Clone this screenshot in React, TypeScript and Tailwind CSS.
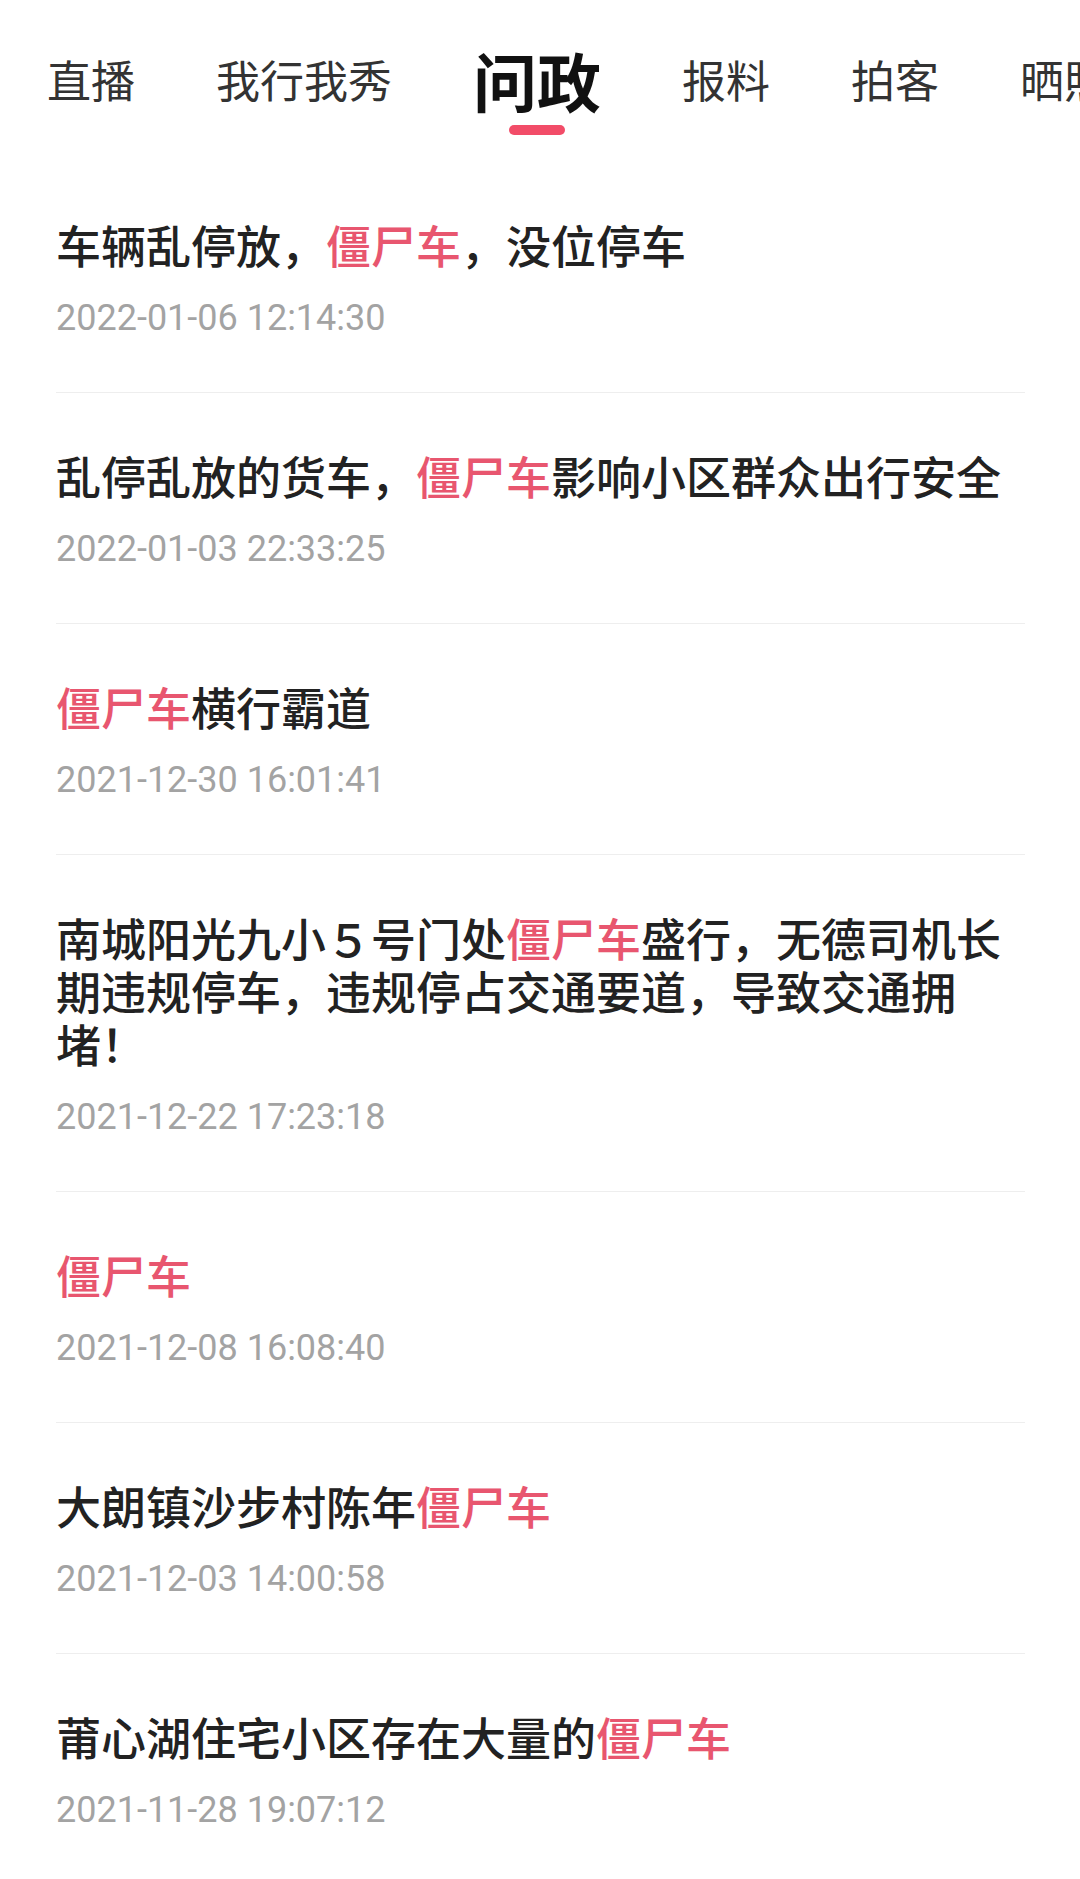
import React from 'react';

const tabs = ['直播', '我行我秀', '问政', '报料', '拍客', '晒照'];

type Part = { text: string; hot?: boolean };

const posts: { title: Part[]; date: string }[] = [
  { title: [{ text: '车辆乱停放，' }, { text: '僵尸车', hot: true }, { text: '，没位停车' }], date: '2022-01-06 12:14:30' },
  { title: [{ text: '乱停乱放的货车，' }, { text: '僵尸车', hot: true }, { text: '影响小区群众出行安全' }], date: '2022-01-03 22:33:25' },
  { title: [{ text: '僵尸车', hot: true }, { text: '横行霸道' }], date: '2021-12-30 16:01:41' },
  {
    title: [
      { text: '南城阳光九小５号门处' },
      { text: '僵尸车', hot: true },
      { text: '盛行，无德司机长期违规停车，违规停占交通要道，导致交通拥堵！' }
    ],
    date: '2021-12-22 17:23:18'
  },
  { title: [{ text: '僵尸车', hot: true }], date: '2021-12-08 16:08:40' },
  { title: [{ text: '大朗镇沙步村陈年' }, { text: '僵尸车', hot: true }], date: '2021-12-03 14:00:58' },
  { title: [{ text: '莆心湖住宅小区存在大量的' }, { text: '僵尸车', hot: true }], date: '2021-11-28 19:07:12' }
];

export default function App() {
  return (
    <div
      className="w-[1080px] h-[1879px] overflow-hidden bg-white"
      style={{ fontFamily: '"Noto Sans CJK SC", "Noto Sans", sans-serif' }}
    >
      {/* Tabs */}
      <div className="h-[162px] pt-[47px] pl-[47px] flex items-start gap-[81px] whitespace-nowrap overflow-hidden">
        {tabs.map((tab) =>
          tab === '问政' ? (
            <div key={tab} className="flex flex-col items-center shrink-0">
              <span className="text-[64px] leading-[64px] font-bold text-[#111111]">{tab}</span>
              <span className="mt-[14px] w-[56px] h-[10px] rounded-full bg-[#f24c68]" />
            </div>
          ) : (
            <span key={tab} className="shrink-0 text-[44px] leading-[64px] text-[#333333]">
              {tab}
            </span>
          )
        )}
      </div>

      {/* Posts */}
      <div className="pl-[56px] pr-[55px]">
        {posts.map((post, i) => (
          <div
            key={i}
            className={`pt-[56px] pb-[52px] ${i < posts.length - 1 ? 'border-b border-[#eeeeee]' : ''}`}
          >
            <p className="text-[45px] leading-[53px] font-medium text-[#222222]">
              {post.title.map((part, j) => (
                <span key={j} className={part.hot ? 'text-[#e8566f]' : ''}>
                  {part.text}
                </span>
              ))}
            </p>
            <p
              className="mt-[25px] text-[36px] leading-[44px] text-[#a3a3a3]"
              style={{ fontFamily: 'Roboto, sans-serif' }}
            >
              {post.date}
            </p>
          </div>
        ))}
      </div>
    </div>
  );
}
